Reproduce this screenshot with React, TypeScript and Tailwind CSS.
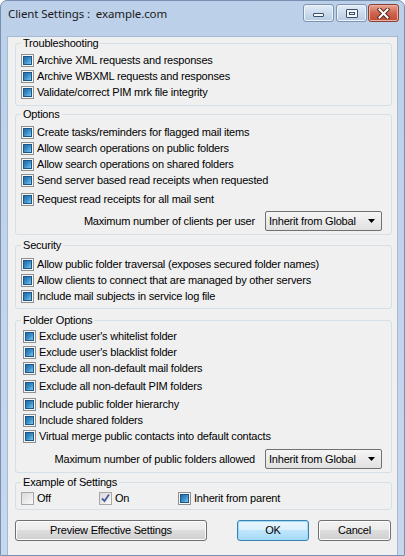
import type { ReactNode } from "react";

type CheckState = "mixed" | "off" | "on";

function Check({ state = "mixed" }: { state?: CheckState }) {
  if (state === "mixed") {
    return (
      <span className="flex h-[13px] w-[13px] shrink-0 items-center justify-center border border-[#8e8f8f] bg-[#f7f7f7]">
        <span className="h-[9px] w-[9px] border border-[#1c5788] bg-linear-to-br from-[#1f6aa3] via-[#3a8fc8] to-[#7cc8ee]" />
      </span>
    );
  }
  return (
    <span className="flex h-[13px] w-[13px] shrink-0 items-center justify-center border border-[#a7a7a7] bg-linear-to-br from-[#d9d9d9] to-[#f9f9f9]">
      {state === "on" && (
        <svg width="11" height="11" viewBox="0 0 11 11">
          <path
            d="M2 5.5 L4.5 8 L9 1.5"
            fill="none"
            stroke="#4a5ea0"
            strokeWidth="1.8"
          />
        </svg>
      )}
    </span>
  );
}

function Row({
  label,
  className = "",
}: {
  label: string;
  className?: string;
}) {
  return (
    <div className={`flex h-[16px] items-center gap-[3px] ${className}`}>
      <Check />
      <span className="whitespace-nowrap">{label}</span>
    </div>
  );
}

function Dropdown({ label, className = "" }: { label: string; className?: string }) {
  return (
    <div className={`flex items-center justify-end gap-[10px] pr-[9px] ${className}`}>
      <span className="whitespace-nowrap">{label}</span>
      <div className="flex h-[20px] w-[117px] items-center justify-between rounded-[2px] border border-[#707070] bg-linear-to-b from-[#f5f5f5] to-[#e1e1e1] pl-[3px] pr-[6px]">
        <span className="whitespace-nowrap">Inherit from Global</span>
        <svg width="7" height="4" viewBox="0 0 7 4">
          <path d="M0 0 H7 L3.5 4 Z" fill="#000" />
        </svg>
      </div>
    </div>
  );
}

function Group({
  title,
  className = "",
  inner = "",
  children,
}: {
  title: string;
  className?: string;
  inner?: string;
  children: ReactNode;
}) {
  return (
    <fieldset
      className={`ml-[7px] w-[377px] rounded-[3px] border border-[#d5dfe5] ${className}`}
    >
      <legend className="ml-[5px] px-[2px] leading-[13px]">{title}</legend>
      <div className={inner}>{children}</div>
    </fieldset>
  );
}

function WinButton({
  children,
  className = "",
  primary = false,
}: {
  children: ReactNode;
  className?: string;
  primary?: boolean;
}) {
  return (
    <div
      className={
        primary
          ? `flex h-[21px] items-center justify-center rounded-[3px] border border-[#3c7fb1] bg-[linear-gradient(#eaf6fd_0%,#d9f0fc_50%,#bee6fd_50%,#a7d9f5_100%)] shadow-[inset_0_0_0_1px_#9ddcf8] ${className}`
          : `flex h-[21px] items-center justify-center rounded-[3px] border border-[#707070] bg-[linear-gradient(#f2f2f2_0%,#ebebeb_50%,#dddddd_50%,#cfcfcf_100%)] shadow-[inset_0_0_0_1px_#fcfcfc] ${className}`
      }
    >
      {children}
    </div>
  );
}

export default function App() {
  return (
    <div className="h-[556px] w-[405px] overflow-hidden rounded-t-[7px] border border-[#7790b0] bg-linear-to-b from-[#bcd0e9] to-[#c6d8ee] font-['Liberation_Sans',Arial,sans-serif] text-[11px] tracking-[-0.2px] text-black">
      {/* title bar */}
      <div className="flex h-[26px] justify-between">
        <div className="flex items-center pl-[7px] font-['Noto_Sans',sans-serif] text-[11.5px] tracking-[-0.1px] text-[#1b1b1b]">
          Client Settings :&nbsp; example.com
        </div>
        <div className="flex items-start gap-[2px] pr-[5px] pt-[3px]">
          <div className="flex h-[18px] w-[31px] items-end justify-center rounded-[3px] border border-[#7d93b0] bg-linear-to-b from-[#e3ecf7] to-[#b6cbe4] pb-[4px] shadow-[inset_0_0_0_1px_#eef4fb]">
            <span className="h-[4px] w-[11px] rounded-[1px] border border-[#3b4f6b] bg-[#f4f7fb]" />
          </div>
          <div className="flex h-[18px] w-[31px] items-center justify-center rounded-[3px] border border-[#7d93b0] bg-linear-to-b from-[#e3ecf7] to-[#b6cbe4] shadow-[inset_0_0_0_1px_#eef4fb]">
            <span className="flex h-[9px] w-[12px] items-center justify-center rounded-[1px] border border-[#3b4f6b] bg-[#f4f7fb]">
              <span className="h-[3px] w-[6px] border border-[#3b4f6b]" />
            </span>
          </div>
          <div className="-ml-[1px] flex h-[18px] w-[31px] items-center justify-center rounded-[3px] border border-[#8a3f33] bg-linear-to-b from-[#e5a593] via-[#cf6450] to-[#c24a33] shadow-[inset_0_0_0_1px_#eab2a5]">
            <svg width="13" height="11" viewBox="0 0 13 11">
              <path d="M2.5 1.5 L10.5 9.5 M10.5 1.5 L2.5 9.5" stroke="#5a2a22" strokeWidth="4" strokeLinecap="square" />
              <path d="M2.5 1.5 L10.5 9.5 M10.5 1.5 L2.5 9.5" stroke="#ffffff" strokeWidth="2" strokeLinecap="square" />
            </svg>
          </div>
        </div>
      </div>

      {/* client area */}
      <div className="mx-[7px] h-[522px] bg-[#f0f0f0] shadow-[0_0_0_1px_#a6bad3]">
        <Group title="Troubleshooting" className="mt-[10px]" inner="pl-[5px] pt-[2px] pb-[5px]">
          <Row label="Archive XML requests and responses" />
          <Row label="Archive WBXML requests and responses" />
          <Row label="Validate/correct PIM mrk file integrity" />
        </Group>

        <Group title="Options" className="mt-[2px]" inner="pl-[5px] pt-[3px] pb-[3px]">
          <Row label="Create tasks/reminders for flagged mail items" />
          <Row label="Allow search operations on public folders" />
          <Row label="Allow search operations on shared folders" />
          <Row label="Send server based read receipts when requested" />
          <Row label="Request read receipts for all mail sent" className="mt-[3px]" />
          <Dropdown label="Maximum number of clients per user" className="mt-[4px]" />
        </Group>

        <Group title="Security" className="mt-[4px]" inner="pl-[5px] pt-[4px] pb-[4px]">
          <Row label="Allow public folder traversal (exposes secured folder names)" />
          <Row label="Allow clients to connect that are managed by other servers" />
          <Row label="Include mail subjects in service log file" />
        </Group>

        <Group title="Folder Options" className="mt-[5px]" inner="pl-[7px] pt-[1px] pb-[3px]">
          <Row label="Exclude user's whitelist folder" />
          <Row label="Exclude user's blacklist folder" />
          <Row label="Exclude all non-default mail folders" />
          <Row label="Exclude all non-default PIM folders" className="mt-[2px]" />
          <Row label="Include public folder hierarchy" className="mt-[2px]" />
          <Row label="Include shared folders" />
          <Row label="Virtual merge public contacts into default contacts" />
          <Dropdown label="Maximum number of public folders allowed" className="mt-[5px]" />
        </Group>

        <Group title="Example of Settings" className="mt-[3px]" inner="flex pl-[5px] pt-[1px] pb-[3px]">
          <div className="flex h-[16px] w-[78px] items-center gap-[3px]">
            <Check state="off" />
            <span>Off</span>
          </div>
          <div className="flex h-[16px] w-[79px] items-center gap-[3px]">
            <Check state="on" />
            <span>On</span>
          </div>
          <div className="flex h-[16px] items-center gap-[3px]">
            <Check />
            <span>Inherit from parent</span>
          </div>
        </Group>

        <div className="mt-[10px] flex pl-[7px]">
          <WinButton className="w-[192px]">Preview Effective Settings</WinButton>
          <WinButton className="ml-[30px] w-[72px]" primary>
            OK
          </WinButton>
          <WinButton className="ml-[9px] w-[73px]">Cancel</WinButton>
        </div>
      </div>
    </div>
  );
}
